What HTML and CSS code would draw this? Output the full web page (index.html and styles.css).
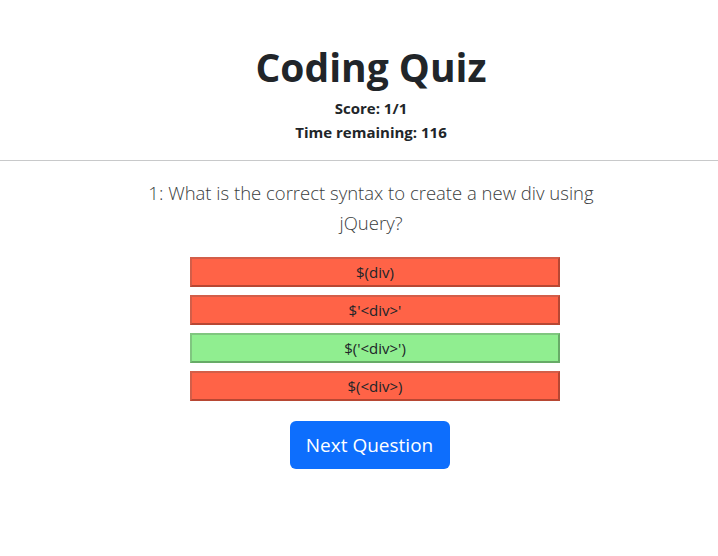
FILE: index.html
```html
<!DOCTYPE html>
<html lang="en">
<head>
<meta charset="utf-8">
<title>Coding Quiz</title>
<link rel="stylesheet" href="styles.css">
</head>
<body>
  <header class="header">
    <h1 class="title">Coding Quiz</h1>
    <div class="stat">Score: 1/1</div>
    <div class="stat">Time remaining: 116</div>
  </header>
  <hr class="divider">
  <main class="quiz">
    <p class="question">1: What is the correct syntax to create a new div using jQuery?</p>
    <div class="answers">
      <button class="answer wrong">$(div)</button>
      <button class="answer wrong">$'&lt;div&gt;'</button>
      <button class="answer right">$('&lt;div&gt;')</button>
      <button class="answer wrong">$(&lt;div&gt;)</button>
    </div>
    <button class="next">Next Question</button>
  </main>
</body>
</html>
```
FILE: styles.css
```css
* { box-sizing: border-box; }
body {
  margin: 0;
  font-family: "Open Sans", "Noto Sans", sans-serif;
  color: #212529;
  background: #fff;
}
.header {
  text-align: center;
  padding: 43px 0 0 24px;
}
.title {
  margin: 0 0 5px;
  font-size: 39px;
  line-height: 48px;
  font-weight: 700;
}
.stat {
  font-size: 15px;
  line-height: 24px;
  font-weight: 700;
}
.divider {
  margin: 16px 0 0;
  border: 0;
  border-top: 1px solid #c8c9ca;
}
.quiz {
  display: flex;
  flex-direction: column;
  align-items: center;
  padding-left: 24px;
}
.question {
  margin: 17px 0 0;
  width: 460px;
  text-align: center;
  font-size: 18.5px;
  line-height: 30px;
  font-weight: 300;
  color: #3a3d40;
}
.answers {
  margin: 19px 0 0 8px;
  width: 370px;
  display: flex;
  flex-direction: column;
  gap: 8px;
}
.answer {
  height: 30px;
  padding: 1px 6px;
  font-family: inherit;
  font-size: 15px;
  line-height: 24px;
  color: #212529;
  border: 2px solid;
  border-color: rgba(80,80,80,0.25) rgba(0,0,0,0.28) rgba(0,0,0,0.28) rgba(80,80,80,0.25);
}
.wrong { background: #ff6347; }
.right { background: #90ee90; }
.next {
  margin: 20px 0 0 -3px;
  width: 160px;
  height: 48px;
  border: 0;
  border-radius: 6px;
  background: #0d6efd;
  color: #fff;
  font-family: inherit;
  font-size: 19px;
}
```
